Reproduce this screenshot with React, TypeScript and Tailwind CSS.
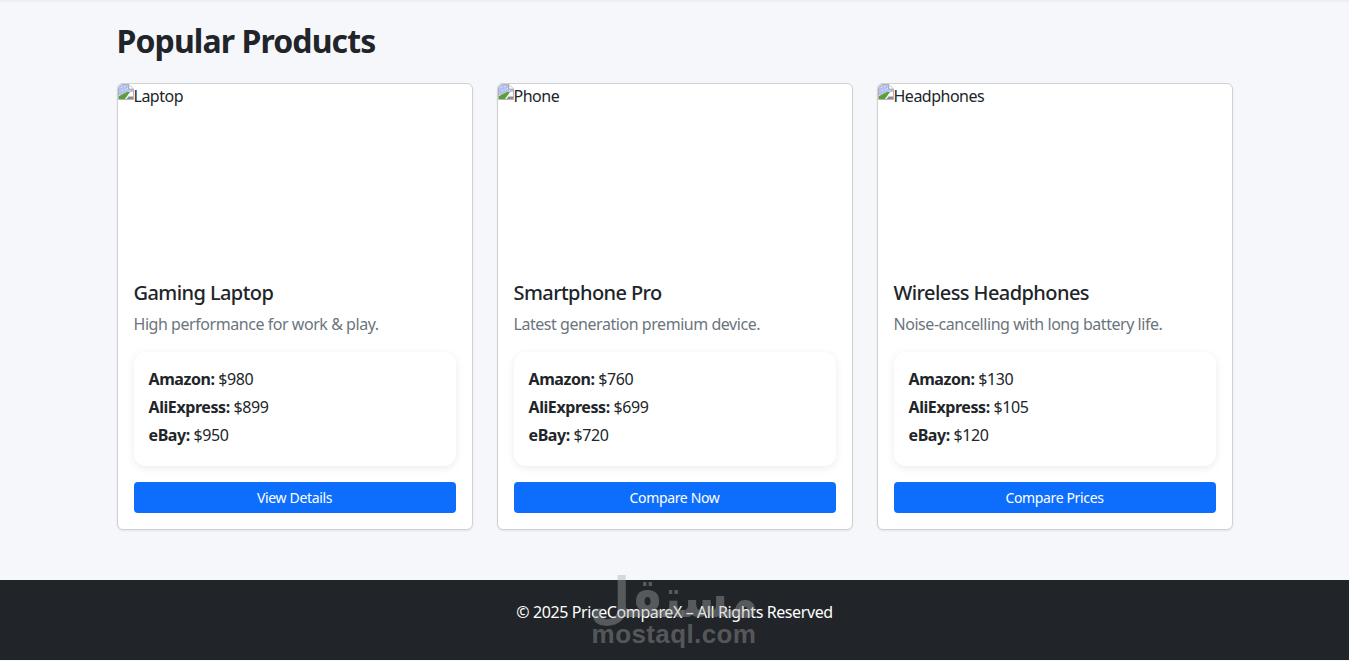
const products = [
  {
    alt: 'Laptop',
    title: 'Gaming Laptop',
    desc: 'High performance for work & play.',
    prices: ['$980', '$899', '$950'],
    action: 'View Details',
  },
  {
    alt: 'Phone',
    title: 'Smartphone Pro',
    desc: 'Latest generation premium device.',
    prices: ['$760', '$699', '$720'],
    action: 'Compare Now',
  },
  {
    alt: 'Headphones',
    title: 'Wireless Headphones',
    desc: 'Noise-cancelling with long battery life.',
    prices: ['$130', '$105', '$120'],
    action: 'Compare Prices',
  },
];

const stores = ['Amazon', 'AliExpress', 'eBay'];

function BrokenImage() {
  return (
    <svg width="16" height="16" viewBox="0 0 16 16" className="shrink-0">
      <path d="M0.5 15.5V3Q0.5 0.5 3 0.5H11L15.5 5V15.5Z" fill="#fff" stroke="#b4b4b4" />
      <path d="M1 11V3Q1 1 3 1H10.5L15 5.5V8L9 8L3 11Z" fill="#b4c1ee" />
      <path d="M3 3h1v1H3zM6 2h1v1H6zM9 4h1v1H9zM4 6h1v1H4zM7 5h1v1H7zM11 6h1v1h-1z" fill="#e6eafa" />
      <path d="M1 15V12L9 8H12L7 15Z" fill="#5a9f38" />
      <path d="M8.5 15H15V12.5H10.5Z" fill="#8c8c8c" />
      <path d="M10.8 0.8V5.2H15.2" fill="#fff" stroke="#a0a0a0" />
    </svg>
  );
}

function ProductCard({ product }: { product: (typeof products)[number] }) {
  return (
    <div className="flex flex-col overflow-hidden rounded-md border border-[#d0d1d3] bg-white shadow-[0_1px_2px_rgba(0,0,0,0.08)]">
      <div className="flex h-[180px] items-start text-[16px] leading-[24px] text-[#212529]">
        <BrokenImage />
        <span className="tracking-[-0.5px]">{product.alt}</span>
      </div>
      <div className="p-4">
        <h5 className="mb-[7px] mt-px text-[20px] font-medium leading-[24px] tracking-[-0.58px] text-[#212529]">{product.title}</h5>
        <p className="mb-4 text-[16px] leading-[24px] tracking-[-0.45px] text-[#6c757d]">{product.desc}</p>
        <div className="mb-4 rounded-xl bg-white px-[15px] pb-[17px] pt-[13px] shadow-[0_2px_8px_rgba(0,0,0,0.08)]">
          {stores.map((store, i) => (
            <div key={store} className="h-[28px] text-[16px] leading-[28px] tracking-[-0.42px] text-[#212529]">
              <strong className="font-bold">{store}:</strong> {product.prices[i]}
            </div>
          ))}
        </div>
        <button className="block h-[31px] w-full rounded bg-[#0d6efd] text-[14px] leading-[21px] tracking-[-0.35px] text-white">
          {product.action}
        </button>
      </div>
    </div>
  );
}

export default function App() {
  return (
    <div className="relative flex h-[661px] flex-col overflow-hidden bg-[#f5f7fb] font-['Noto_Sans',sans-serif]">
      <div className="h-[2px] bg-[#eceef1]" />
      <main className="mx-auto h-[578px] w-[1140px] px-3 pt-[15px]">
        <h2 className="mb-[18px] text-[32px] font-bold leading-[48px] tracking-[-0.9px] text-[#212529]">Popular Products</h2>
        <div className="grid grid-cols-3 gap-6">
          {products.map((product) => (
            <ProductCard key={product.alt} product={product} />
          ))}
        </div>
      </main>
      <footer className="flex h-[80px] items-start justify-center bg-[#212529] pt-[20px] text-[16px] leading-[24px] tracking-[-0.4px] text-white">
        © 2025 PriceCompareX – All Rights Reserved
      </footer>
      <div className="h-px bg-[#f5f7fb]" />
      {/* mostaql watermark over the footer */}
      <div className="pointer-events-none absolute left-[592px] top-[575px] flex w-[164px] flex-col items-center text-[#aaaaaa]/40">
        <span dir="rtl" className="scale-y-[1.2] font-['DejaVu_Sans',sans-serif] text-[46px] font-bold leading-[46px]">مستقل</span>
        <span className="font-['Liberation_Sans',sans-serif] text-[26px] font-bold leading-[26px] tracking-[0.4px]">mostaql.com</span>
      </div>
    </div>
  );
}
